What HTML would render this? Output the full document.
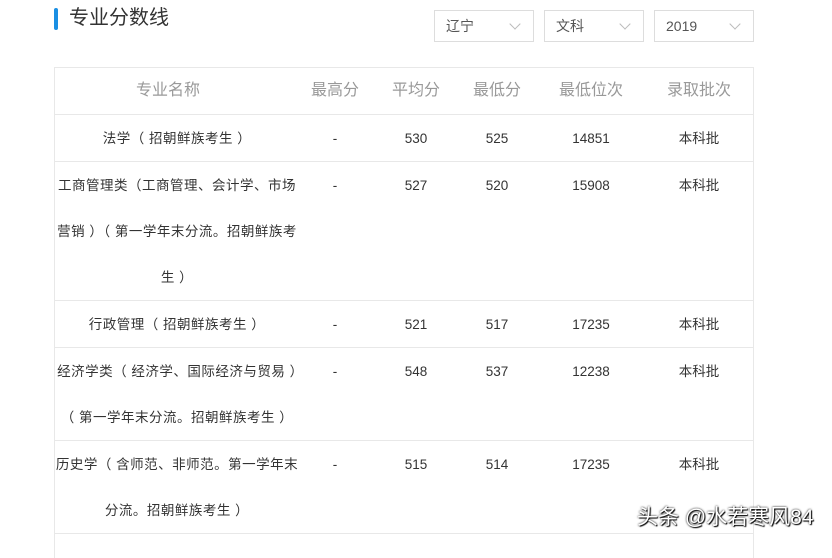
<!DOCTYPE html>
<html><head><meta charset="utf-8"><style>
body{margin:0;width:832px;height:545px;overflow:hidden;background:#fff;font-family:"Liberation Sans","Noto Sans CJK SC",sans-serif;color:#333;position:relative}
.bar{position:absolute;left:54px;top:8px;width:4px;height:22px;background:#1a8fe3;border-radius:2px}
.title{position:absolute;left:69px;top:5px;font-size:20px;color:#333;line-height:26px}
.sel{position:absolute;top:10px;width:98px;height:30px;border:1px solid #ddd;font-size:14px;line-height:30px;color:#555;box-sizing:content-box}
.sel span{position:absolute;left:11px}
.sel i{position:absolute;right:14px;top:9px;width:7px;height:7px;border-right:1px solid #bbb;border-bottom:1px solid #bbb;transform:rotate(45deg)}
.tbl{position:absolute;left:54px;top:67px;width:698px;height:490px;border:1px solid #e8e8e8;border-bottom:none}
.row{position:absolute;left:0;width:698px;border-bottom:1px solid #e8e8e8}
.c{position:absolute;top:1px;text-align:center;font-size:13.5px;line-height:46px}
.h .c{font-size:16px;color:#999;top:0}
.n{left:0;width:244px;letter-spacing:0.5px}
</style></head><body>
<div class="bar"></div><div class="title">专业分数线</div>
<div class="sel" style="left:434px"><span>辽宁</span><i></i></div>
<div class="sel" style="left:544px"><span>文科</span><i></i></div>
<div class="sel" style="left:654px"><span>2019</span><i></i></div>
<div class="tbl">
<div class="row h" style="top:0;height:46px"><div class="c n" style="width:226px;letter-spacing:0">专业名称</div><div class="c" style="left:240px;width:80px">最高分</div><div class="c" style="left:321px;width:80px">平均分</div><div class="c" style="left:402px;width:80px">最低分</div><div class="c" style="left:486px;width:100px">最低位次</div><div class="c" style="left:594px;width:100px">录取批次</div></div>
<div class="row" style="top:47px;height:46px"><div class="c n">法学（ 招朝鲜族考生 ）</div><div class="c" style="left:240px;width:80px">-</div><div class="c" style="left:321px;width:80px">530</div><div class="c" style="left:402px;width:80px">525</div><div class="c" style="left:486px;width:100px">14851</div><div class="c" style="left:594px;width:100px">本科批</div></div>
<div class="row" style="top:94px;height:138px"><div class="c n">工商管理类（工商管理、会计学、市场营销 ）（ 第一学年末分流。招朝鲜族考生 ）</div><div class="c" style="left:240px;width:80px">-</div><div class="c" style="left:321px;width:80px">527</div><div class="c" style="left:402px;width:80px">520</div><div class="c" style="left:486px;width:100px">15908</div><div class="c" style="left:594px;width:100px">本科批</div></div>
<div class="row" style="top:233px;height:46px"><div class="c n">行政管理（ 招朝鲜族考生 ）</div><div class="c" style="left:240px;width:80px">-</div><div class="c" style="left:321px;width:80px">521</div><div class="c" style="left:402px;width:80px">517</div><div class="c" style="left:486px;width:100px">17235</div><div class="c" style="left:594px;width:100px">本科批</div></div>
<div class="row" style="top:280px;height:92px"><div class="c n">经济学类（ 经济学、国际经济与贸易 ）（ 第一学年末分流。招朝鲜族考生 ）</div><div class="c" style="left:240px;width:80px">-</div><div class="c" style="left:321px;width:80px">548</div><div class="c" style="left:402px;width:80px">537</div><div class="c" style="left:486px;width:100px">12238</div><div class="c" style="left:594px;width:100px">本科批</div></div>
<div class="row" style="top:373px;height:92px"><div class="c n">历史学（ 含师范、非师范。第一学年末分流。招朝鲜族考生 ）</div><div class="c" style="left:240px;width:80px">-</div><div class="c" style="left:321px;width:80px">515</div><div class="c" style="left:402px;width:80px">514</div><div class="c" style="left:486px;width:100px">17235</div><div class="c" style="left:594px;width:100px">本科批</div></div>
</div>
<div style="position:absolute;left:637px;top:505px;font-size:21px;color:#fff;text-shadow:0 0 2px #000,1px 1px 1px #000;line-height:26px">头条 @水若寒风84</div>
</body></html>
